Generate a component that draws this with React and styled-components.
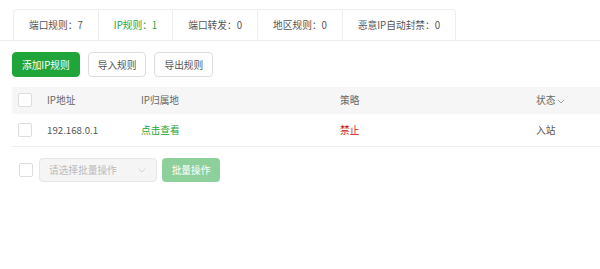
import React from "react";
import styled, { createGlobalStyle } from "styled-components";

const Global = createGlobalStyle`
  html, body { margin: 0; padding: 0; background: #fff; }
  body { font-family: "Noto Sans CJK SC", "Noto Sans", sans-serif; font-size: 9.7px; color: #666; }
  * { box-sizing: border-box; }
`;

const Page = styled.div`
  width: 600px;
  height: 269px;
  overflow: hidden;
  padding-top: 9px;
`;

const TabBar = styled.div`
  display: flex;
  border-bottom: 1px solid #eee;
  padding-left: 13px;
`;

const Tab = styled.div`
  height: 31px;
  padding: 0 15px;
  display: flex;
  align-items: center;
  font-size: 9.7px;
  color: ${(p) => (p.$active ? "#20a53a" : "#555")};
  border: 1px solid #eee;
  border-bottom: none;
  border-left: ${(p) => (p.$first ? "1px solid #eee" : "none")};
  border-radius: ${(p) => (p.$first ? "4px 0 0 0" : p.$last ? "0 4px 0 0" : "0")};
  background: #fff;
  white-space: nowrap;
`;

const Body = styled.div`
  padding: 11px 0 0 12px;
`;

const Toolbar = styled.div`
  display: flex;
  gap: 8px;
`;

const Btn = styled.button`
  height: 25px;
  padding: 0 9px;
  font-family: inherit;
  font-size: 9.7px;
  border-radius: 4px;
  border: 1px solid ${(p) => (p.$primary ? "#20a53a" : "#ddd")};
  background: ${(p) => (p.$primary ? "#20a53a" : "#fff")};
  color: ${(p) => (p.$primary ? "#fff" : "#555")};
  cursor: pointer;
`;

const Table = styled.div`
  margin-top: 10px;
`;

const Row = styled.div`
  display: grid;
  grid-template-columns: 35px 94px 199px 196px 1fr;
  align-items: center;
  height: ${(p) => (p.$head ? 27 : 33)}px;
  background: ${(p) => (p.$head ? "#f6f6f6" : "#fff")};
  border-bottom: 1px solid ${(p) => (p.$head ? "#f6f6f6" : "#eee")};
  color: ${(p) => (p.$head ? "#666" : "#555")};
`;

const Check = styled.span`
  display: inline-block;
  width: 14px;
  height: 14px;
  border: 1px solid #ddd;
  border-radius: 2px;
  background: #fff;
  margin-left: ${(p) => p.$ml || 6}px;
`;

const Cell = styled.div`
  color: ${(p) => p.$color || "inherit"};
  display: flex;
  align-items: center;
  white-space: nowrap;
`;

const Footer = styled.div`
  display: flex;
  align-items: center;
  margin-top: 11px;
`;

const Select = styled.div`
  width: 118px;
  height: 24px;
  margin-left: 6px;
  border: 1px solid #e6e6e6;
  border-radius: 4px;
  background: #f5f5f5;
  color: #bbb;
  display: flex;
  align-items: center;
  justify-content: space-between;
  padding: 0 10px 0 9px;
`;

const BatchBtn = styled.button`
  height: 24px;
  margin-left: 5px;
  width: 58px;
  padding: 0;
  font-family: inherit;
  font-size: 9.7px;
  border: none;
  border-radius: 4px;
  background: #8dd09b;
  color: #fff;
`;

const Chevron = ({ color = "#aaa", size = 8 }) => (
  <svg width={size} height={size * 0.6} viewBox="0 0 10 6" fill="none">
    <path d="M1 1l4 4 4-4" stroke={color} strokeWidth="1" />
  </svg>
);

export default function App() {
  const tabs = ["端口规则：7", "IP规则：1", "端口转发：0", "地区规则：0", "恶意IP自动封禁：0"];
  return (
    <Page>
      <Global />
      <TabBar>
        {tabs.map((t, i) => (
          <Tab key={t} $active={i === 1} $first={i === 0} $last={i === tabs.length - 1}>
            {t}
          </Tab>
        ))}
      </TabBar>
      <Body>
        <Toolbar>
          <Btn $primary>添加IP规则</Btn>
          <Btn>导入规则</Btn>
          <Btn>导出规则</Btn>
        </Toolbar>
        <Table>
          <Row $head>
            <Check />
            <Cell>IP地址</Cell>
            <Cell>IP归属地</Cell>
            <Cell>策略</Cell>
            <Cell>
              状态<span style={{ marginLeft: 2 }}><Chevron color="#888" /></span>
            </Cell>
          </Row>
          <Row>
            <Check />
            <Cell>192.168.0.1</Cell>
            <Cell $color="#20a53a">点击查看</Cell>
            <Cell $color="#c81414">禁止</Cell>
            <Cell>入站</Cell>
          </Row>
        </Table>
        <Footer>
          <Check $ml={7} />
          <Select>
            <span>请选择批量操作</span>
            <Chevron color="#ccc" />
          </Select>
          <BatchBtn>批量操作</BatchBtn>
        </Footer>
      </Body>
    </Page>
  );
}
